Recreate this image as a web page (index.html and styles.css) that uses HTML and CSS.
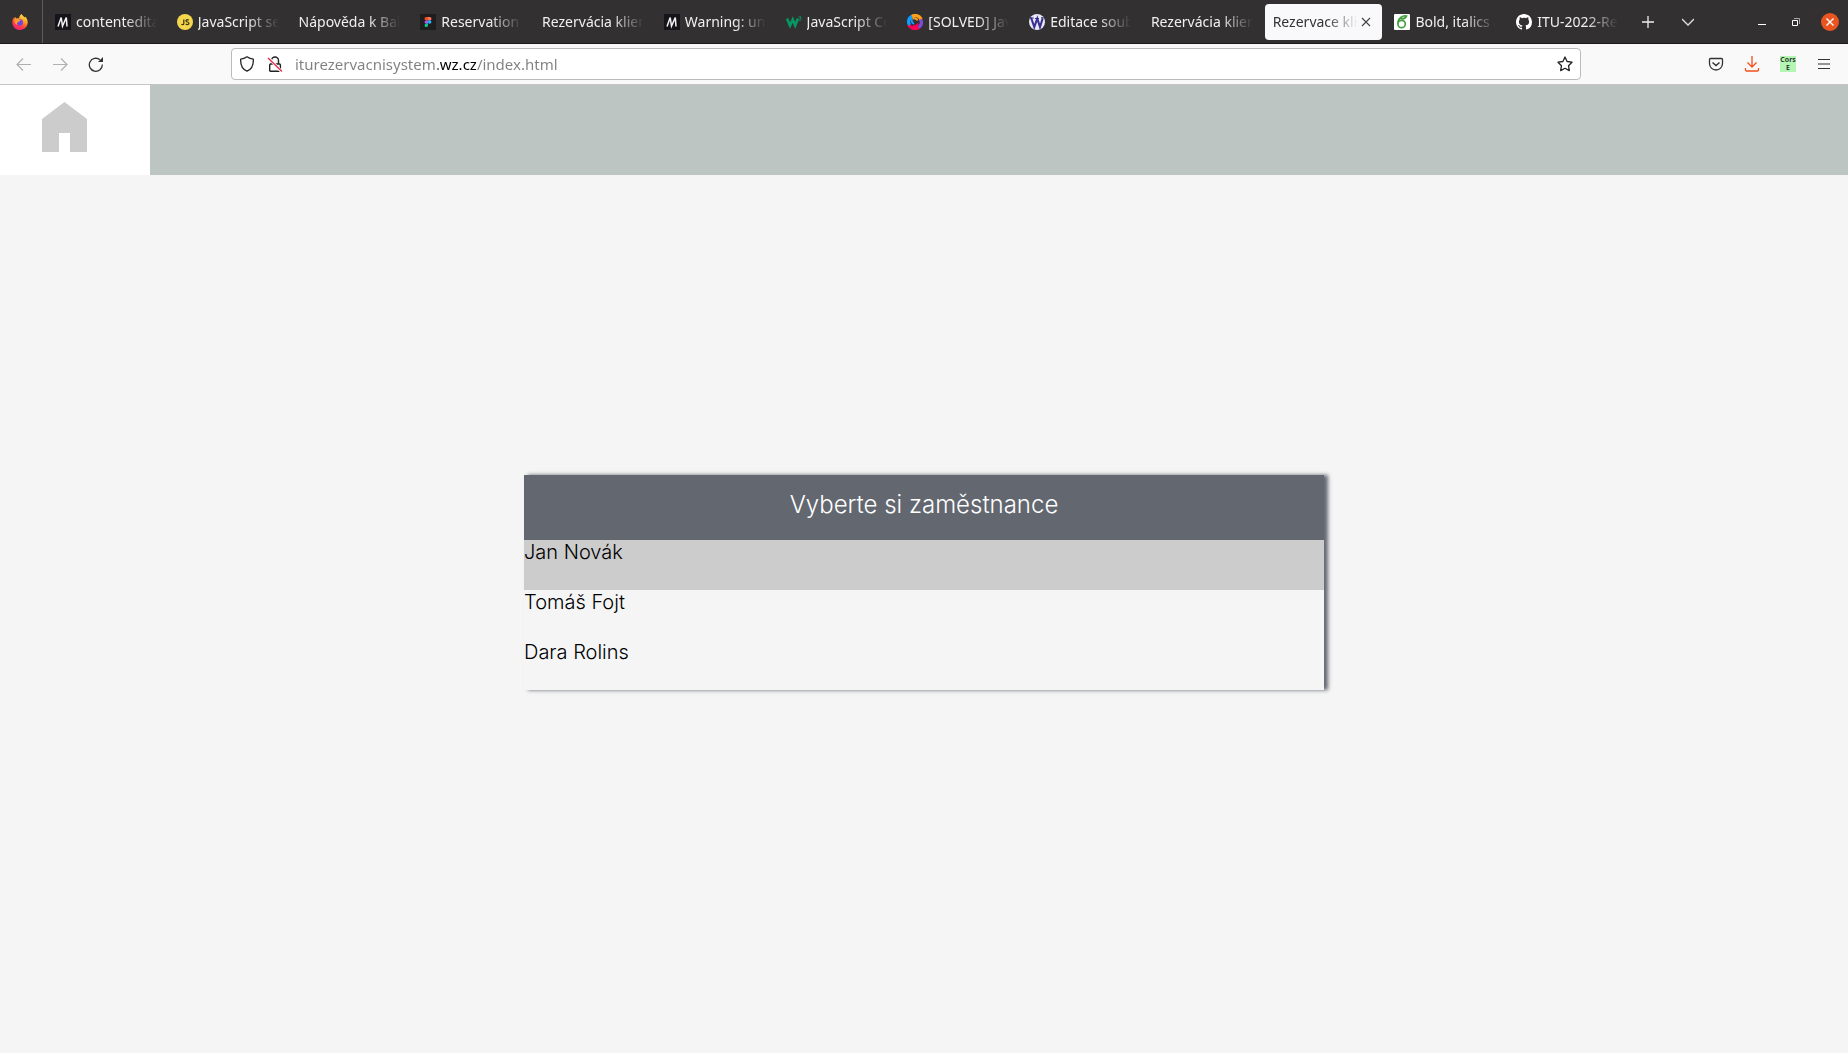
FILE: index.html
```html
<!DOCTYPE html>
<html lang="cs">
<head>
<meta charset="utf-8">
<meta name="viewport" content="width=device-width, initial-scale=1">
<title>Rezervace klientů</title>
<link rel="stylesheet" href="styles.css">
</head>
<body>
<header class="browser">
  <div class="tabbar">
    <button class="firefox" aria-label="Firefox">
      <svg width="16" height="16" viewBox="0 0 16 16">
        <defs><linearGradient id="fox" x1="0.8" y1="0" x2="0.3" y2="1"><stop offset="0" stop-color="#fff04a"/><stop offset="0.4" stop-color="#ff9a20"/><stop offset="0.7" stop-color="#ff4040"/><stop offset="1" stop-color="#f01c80"/></linearGradient></defs>
        <path fill="url(#fox)" d="M9.8 0c.4 1.4 1.7 2.3 2.8 3.4l.5-1C14.800 4 15.800 6.200 15.700 8.600 15.500 12.700 12.200 16 8 16S.3 12.700.3 8.400c0-2 .8-3.800 2-5.200L2.600 4.400 3.400 3l1 1.500c1-.4 1.800-.3 2.600 0C7.200 2.600 8.200.900 9.800 0z"/>
        <circle cx="7.900" cy="8.400" r="3.100" fill="#7246e0"/>
        <path fill="#ff9b28" d="M2.800 5.800c1.500-1.500 3.500-1.200 4.700-.1L8.800 6.400 7 7.500 5.800 8.600c-1 .2-1.200 1.600-.3 2.500C3.200 10.800 2 8 2.800 5.800z"/>
      </svg>
    </button>
    <nav class="tabs" aria-label="Panely">
      <a class="tab" href="#"><svg width="16" height="16" viewBox="0 0 16 16"><path fill="#15141a" d="M0 0h16v16H0z"/><path d="M3 12.500 6.200 3.500 7.500 12 11.300 3.500 12 12.500" fill="none" stroke="#f2f2f2" stroke-width="1.500"/></svg><span class="label">contenteditable</span></a>
      <a class="tab" href="#"><svg width="16" height="16" viewBox="0 0 16 16"><circle cx="8" cy="8" r="8" fill="#f5d74e"/><path d="M6.800 5.500v4q0 1.200-1.200 1.200-.8 0-1.200-.5M11.800 6.200Q11 5.600 10.200 5.600 9 5.700 9 6.700 9 7.600 10.400 8q1.500.4 1.500 1.300 0 1.200-1.400 1.300Q9.400 10.700 8.700 10" fill="none" stroke="#453b14" stroke-width="1.300"/></svg><span class="label">JavaScript set</span></a>
      <a class="tab" href="#"><span class="label">Nápověda k Bakaláři</span></a>
      <a class="tab" href="#"><svg width="16" height="16" viewBox="0 0 16 16"><path fill="#1e1e1e" d="M0 0h16v16H0z"/><path fill="#f24e1e" d="M8 3v3.400H6.200a1.700 1.700 0 0 1 0-3.400z"/><path fill="#ff7262" d="M8 3h1.800a1.700 1.700 0 0 1 0 3.400H8z"/><path fill="#a259ff" d="M8 6.400v3.300H6.200a1.650 1.650 0 0 1 0-3.300z"/><circle cx="9.700" cy="8" r="1.700" fill="#1abcfe"/><path fill="#0acf83" d="M6.200 9.700H8v1.600a1.700 1.700 0 1 1-1.800-1.600z"/></svg><span class="label">Reservation</span></a>
      <a class="tab" href="#"><span class="label">Rezervácia klientov</span></a>
      <a class="tab" href="#"><svg width="16" height="16" viewBox="0 0 16 16"><path fill="#15141a" d="M0 0h16v16H0z"/><path d="M3 12.500 6.200 3.500 7.500 12 11.300 3.500 12 12.500" fill="none" stroke="#f2f2f2" stroke-width="1.500"/></svg><span class="label">Warning: unsafe</span></a>
      <a class="tab" href="#"><svg width="16" height="16" viewBox="0 0 16 16"><path d="M1 4.500 4 11.500 6.800 5.500 9.200 11.500 12 4.500" fill="none" stroke="#059862" stroke-width="2.600"/><path d="M12.500 2.800H15L13.700 4.400Q15.200 4.300 15.200 5.400 15 6.800 12.800 6.200" fill="none" stroke="#059862" stroke-width="0.900"/></svg><span class="label">JavaScript Cookies</span></a>
      <a class="tab" href="#"><svg width="16" height="16" viewBox="0 0 16 16" fill="none" stroke-width="3.400"><path stroke="#ff9f1a" d="M4.700 2.800C7.500.4 12 1.400 14.200 5.400"/><path stroke="#7e4bd8" d="M13.500 5.300c1.800 3 1 6.700-2.700 8.700"/><path stroke="#fc0254" d="M11.500 13.200C8.800 15.600 3.800 14.800 1.700 10.700"/><path stroke="#109dff" d="M2.800 11C.600 8.400 1.400 4 5 2.200"/><path stroke="#109dff" stroke-width="2" d="M5 4.500C4 6.500 4.800 8.800 7 9.800"/><path stroke="#ff9f1a" stroke-width="2" d="M5.500 4.500C7.500 3.600 10 4.600 10.500 6.500"/><path stroke="#fc0254" stroke-width="2" d="M6 11.500c2 1 4.500.2 5-2"/></svg><span class="label">[SOLVED] JavaScript</span></a>
      <a class="tab" href="#"><svg width="16" height="16" viewBox="0 0 16 16"><circle cx="8" cy="8" r="8" fill="#e9e8f5"/><path d="M2 3.500 5.300 13 8.300 4.500 11 13 13.700 4.200" fill="none" stroke="#3c2f92" stroke-width="2.100"/><path d="M.8 4h4M6 4.500h4M12 3.700h2.500" stroke="#3c2f92"/></svg><span class="label">Editace souboru</span></a>
      <a class="tab" href="#"><span class="label">Rezervácia klientov</span></a>
      <div class="tab active"><a class="label" href="#" aria-current="page">Rezervace klientů</a><button class="close" aria-label="Zavřít panel"><svg width="10" height="10" viewBox="0 0 10 10"><path d="m1 1 8 8M9 1 1 9" stroke="#444" stroke-width="1.100"/></svg></button></div>
      <a class="tab" href="#"><svg width="16" height="16" viewBox="0 0 16 16"><rect width="16" height="16" rx="1" fill="#fff"/><g fill="none" stroke="#47a141" stroke-width="1.700"><circle cx="7.600" cy="10" r="3.700"/><path d="M4 9.500C3.800 6 6 3.500 9 2.200M6.500 4.500c2 .7 4.500.3 6-2.500C10 1.300 8 2.200 6.500 4.500z"/></g></svg><span class="label">Bold, italics and</span></a>
      <a class="tab" href="#"><svg width="16" height="16" viewBox="0 0 16 16"><path fill="#fff" d="M8 0C3.580 0 0 3.580 0 8c0 3.540 2.290 6.530 5.470 7.590.4.070.55-.17.55-.38 0-.19-.010-.82-.010-1.490-2.010.37-2.530-.49-2.690-.94-.09-.23-.48-.94-.82-1.130-.28-.15-.68-.52-.010-.53.63-.010 1.080.58 1.230.82.72 1.210 1.870.87 2.330.66.070-.52.28-.87.51-1.070-1.780-.2-3.640-.89-3.640-3.950 0-.87.31-1.590.82-2.150-.08-.2-.36-1.020.08-2.120 0 0 .67-.21 2.200.82A7.600 7.600 0 0 1 8 3.870c.68 0 1.360.09 2 .27 1.530-1.040 2.200-.82 2.200-.82.44 1.100.16 1.920.08 2.120.51.56.82 1.270.82 2.150 0 3.070-1.870 3.750-3.650 3.950.29.25.54.73.54 1.480 0 1.070-.010 1.930-.010 2.200 0 .21.15.46.55.38A8.010 8.010 0 0 0 16 8c0-4.420-3.580-8-8-8z"/></svg><span class="label">ITU-2022-Rezervace</span></a>
    </nav>
    <div class="tab-tools">
      <button aria-label="Nový panel"><svg width="12" height="12" viewBox="0 0 12 12"><path d="M6 0v12M0 6h12" stroke="#eee" stroke-width="1.300"/></svg></button>
      <button aria-label="Seznam panelů"><svg width="12" height="8" viewBox="0 0 12 8"><path d="m0 1 6 6 6-6" fill="none" stroke="#ddd" stroke-width="1.300"/></svg></button>
    </div>
    <div class="window-tools">
      <button aria-label="Minimalizovat"><svg width="8" height="8" viewBox="0 0 8 8"><path d="M0 6.500h8" stroke="#fff"/></svg></button>
      <button aria-label="Obnovit"><svg width="8" height="8" viewBox="0 0 8 8" fill="none"><path d="M.5 2.500h5v5h-5z" stroke="#fff"/><path d="M2 .5h5.500V6" stroke="#aaa"/></svg></button>
      <button aria-label="Zavřít okno"><svg width="18" height="18" viewBox="0 0 18 18"><circle cx="9" cy="9" r="9" fill="#e95420"/><path d="m5.500 5.500 7 7M12.500 5.500l-7 7" stroke="#fff" stroke-width="1.400"/></svg></button>
    </div>
  </div>
  <div class="toolbar">
    <div class="history">
      <button aria-label="Zpět"><svg width="16" height="16" viewBox="0 0 16 16"><path d="M15 8.500H1.500M7 2.500l-6 6 6 6" fill="none" stroke="#b0b0b0" stroke-width="1.200"/></svg></button>
      <button aria-label="Vpřed"><svg width="16" height="16" viewBox="0 0 16 16"><path d="M1 8.500h13.500M9 2.500l6 6-6 6" fill="none" stroke="#b0b0b0" stroke-width="1.200"/></svg></button>
      <button aria-label="Obnovit stránku"><svg width="16" height="16" viewBox="0 0 16 16"><path d="M14.300 8.500A6.500 6.500 0 1 1 12 3.800" fill="none" stroke="#333" stroke-width="1.300"/><path d="M15 1v5h-5z" fill="#333"/></svg></button>
    </div>
    <div class="urlbox">
      <svg width="16" height="16" viewBox="0 0 16 16"><path d="M8 .8Q11 3 14.300 3.200C14.600 8.500 12.800 13.200 8 15.200 3.200 13.200 1.400 8.500 1.700 3.200 5 3 8 .8 8 .8z" fill="none" stroke="#222" stroke-width="1.300" stroke-linejoin="round"/></svg>
      <svg width="16" height="16" viewBox="0 0 16 16"><g fill="none" stroke="#222" stroke-width="1.400"><rect x="2.700" y="8" width="10.700" height="7.300" rx="1"/><path d="M4.500 8V4.500a3.500 3.500 0 0 1 7 0V8"/></g><path d="m1.500 2 13 13.500" stroke="#fff" stroke-width="3"/><path d="m1 2 14 13.500" stroke="#e22850" stroke-width="1.300"/></svg>
      <input class="url" type="text" aria-label="Adresa" value="iturezervacnisystem.wz.cz/index.html">
      <button aria-label="Přidat záložku"><svg width="16" height="16" viewBox="0 0 16 16"><path d="m8 1 2.100 4.500 4.900.7-3.500 3.500.8 4.900L8 12.300l-4.300 2.300.8-4.900L1 6.200l4.900-.7z" fill="none" stroke="#222" stroke-width="1.300" stroke-linejoin="round"/></svg></button>
    </div>
    <div class="extras">
      <button aria-label="Pocket"><svg width="16" height="16" viewBox="0 0 16 16"><path d="M2.500 2.500h11q1 0 1 1V7.500a6.500 6.500 0 0 1-13 0V3.500q0-1 1-1z" fill="none" stroke="#333" stroke-width="1.300"/><path d="m4.500 6.500 3.500 3 3.500-3" fill="none" stroke="#333" stroke-width="1.500"/></svg></button>
      <button aria-label="Stahování"><svg width="16" height="16" viewBox="0 0 16 16"><path d="M8 0v11M3.500 6.500 8 11l4.500-4.500M1.500 12v2q0 1 1 1h11q1 0 1-1v-2" fill="none" stroke="#f0501c" stroke-width="1.300"/></svg></button>
      <button class="cors" aria-label="Cors E">Cors<br>E</button>
      <button aria-label="Nabídka"><svg width="12" height="12" viewBox="0 0 12 12"><path d="M0 1.500h12M0 6h12M0 10.500h12" stroke="#333" stroke-width="1.100"/></svg></button>
    </div>
  </div>
</header>
<div class="site-bar">
  <a class="home" href="#" aria-label="Domů"><svg width="45" height="50" viewBox="0 0 45 50"><path fill="#ccc" d="M22.500 0 45 17v33H28V31H17v19H0V17z"/></svg></a>
</div>
<main class="page">
  <section class="picker">
    <h1 class="picker-title">Vyberte si zaměstnance</h1>
    <button class="employee selected">Jan Novák</button>
    <button class="employee">Tomáš Fojt</button>
    <button class="employee">Dara Rolins</button>
  </section>
</main>
</body>
</html>
```
FILE: styles.css
```css
* { box-sizing: border-box; }
body {
  margin: 0;
  background: #f5f5f5;
  color: #000;
  font-family: Inter, sans-serif;
}
button {
  display: flex;
  align-items: center;
  justify-content: center;
  margin: 0;
  padding: 0;
  border: 0;
  background: none;
  color: inherit;
  font: inherit;
}
a { color: inherit; text-decoration: none; }
svg { display: block; flex: none; }

.browser { font-family: "Noto Sans", sans-serif; font-size: 14px; }
.tabbar {
  display: flex;
  height: 44px;
  background: #333031;
  border-bottom: 1px solid #1c1b1b;
  color: #f0f0f0;
}
.firefox {
  width: 43px;
  padding-right: 2px;
  border-right: 1px solid #5f5d5d;
}
.tabs {
  display: flex;
  flex: 1;
  min-width: 0;
  padding: 4px 0 3px 2px;
}
.tab {
  display: flex;
  flex: 1 1 0;
  align-items: center;
  gap: 5px;
  min-width: 0;
  margin: 0 2px;
  padding: 0 8px;
  border-radius: 4px;
}
.label {
  flex: 1;
  min-width: 0;
  overflow: hidden;
  white-space: nowrap;
  line-height: 20px;
  mask-image: linear-gradient(to left, transparent, #000 32px);
}
.tab.active {
  gap: 0;
  background: #f9f9fb;
  color: #333;
}
.close { width: 16px; height: 16px; }
.tab-tools { display: flex; width: 80px; }
.tab-tools button { width: 40px; }
.window-tools { display: flex; gap: 18px; width: 140px; padding-left: 46px; }
.window-tools button { width: 16px; }

.toolbar {
  display: flex;
  align-items: center;
  height: 41px;
  padding: 0 16px 1px 6px;
  background: #f9f9f9;
  border-bottom: 1px solid #c4c4c4;
}
.history { display: flex; width: 225px; }
.history button { width: 36px; height: 32px; }
.urlbox {
  display: flex;
  flex: 1;
  align-items: center;
  gap: 12px;
  height: 32px;
  padding: 0 7px;
  background: #fff;
  border: 1px solid #bbb;
  border-radius: 4px;
}
.url {
  flex: 1;
  min-width: 0;
  padding: 0;
  border: 0;
  outline: 0;
  background: linear-gradient(to right, #808080 143px, #000 143px 181px, #808080 181px);
  background-clip: text;
  color: transparent;
  font: inherit;
  font-size: 15px;
}
.extras { display: flex; justify-content: flex-end; gap: 20px; width: 251px; }
.extras button { width: 16px; height: 16px; }
.extras .cors {
  background: #b3f5b3;
  color: #222;
  font-size: 7px;
  font-weight: 600;
  line-height: 8px;
}

.site-bar { display: flex; height: 90px; background: #bdc5c2; }
.home { width: 150px; padding: 17px 42px; background: #fff; }

.page { padding: 300px 24px; }
.picker {
  max-width: 800px;
  margin: 0 auto;
  background: #f5f5f5;
  box-shadow: 4px 0 4px #626770;
}
.picker-title {
  height: 65px;
  margin: 0;
  padding-top: 15px;
  background: #626770;
  color: #fff;
  font-size: 24px;
  font-weight: 300;
  text-align: center;
}
.employee {
  align-items: flex-start;
  justify-content: flex-start;
  width: 100%;
  height: 50px;
  font-size: 20px;
  font-weight: 300;
}
.employee.selected { background: #ccc; }
```
